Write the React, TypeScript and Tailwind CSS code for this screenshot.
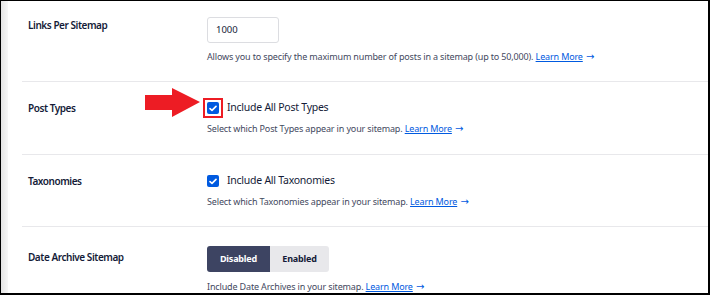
import React from "react";

const font = { fontFamily: '"Noto Sans", "Open Sans", Arial, sans-serif' };

function Check() {
  return (
    <span className="inline-flex items-center justify-center w-[12px] h-[12px] rounded-[2px] bg-[#005ae0]">
      <svg width="8" height="7" viewBox="0 0 8 7" fill="none">
        <path d="M1 3.6 L3 5.4 L7 1.4" stroke="white" strokeWidth="1.6" strokeLinecap="round" strokeLinejoin="round" />
      </svg>
    </span>
  );
}

function Learn() {
  return (
    <>
      {" "}
      <a className="text-[#005ae0] underline underline-offset-1">Learn More</a>
      <span className="text-[#005ae0] text-[10px] tracking-normal" style={{ fontFamily: '"DejaVu Sans", sans-serif' }}> →</span>
    </>
  );
}

const label = "w-[185px] pl-[6px] text-[10px] tracking-[-0.45px] font-semibold text-[#141b38]";
const desc = "text-[9px] leading-[14px] tracking-[-0.15px] text-[#434960] whitespace-nowrap";

export default function App() {
  return (
    <div style={font} className="w-[710px] h-[295px] overflow-hidden bg-white border-t border-l border-r-2 border-b-2 border-black flex">
      <div className="w-[7px] shrink-0 bg-gradient-to-r from-[#e4e4e4] to-[#f7f7f7]" />
      <div className="flex-1 ml-[14px] flex flex-col">
        {/* Row 1 */}
        <div className="flex border-b border-[#e8e8eb] pt-[16px] pb-[17px]">
          <div className={label + " leading-[16px]"}>Links Per Sitemap</div>
          <div className="flex flex-col">
            <div className="w-[72px] h-[26px] border border-[#dcdde1] rounded-[3px] flex items-center pl-[8px] text-[9.5px] text-[#141b38]">1000</div>
            <div className={desc + " mt-[7px]"}>
              Allows you to specify the maximum number of posts in a sitemap (up to 50,000).<Learn />
            </div>
          </div>
        </div>
        {/* Row 2 */}
        <div className="flex border-b border-[#e8e8eb] pt-[16px] pb-[18px]">
          <div className={label + " leading-[20px]"}>Post Types</div>
          <div className="flex flex-col">
            <div className="flex items-center h-[20px]">
              <span className="relative inline-flex">
                <Check />
                <span className="absolute left-[-4px] top-[-4px] w-[20px] h-[20px] border-2 border-[#ed1c24]" />
                <svg className="absolute left-[-62px] top-[-15px]" width="56" height="32" viewBox="0 0 56 32">
                  <polygon points="0,8 27,8 27,1 55,15 27,30 27,23 0,23" fill="#ed1c24" />
                </svg>
              </span>
              <span className="ml-[8px] text-[10.5px] tracking-[-0.25px] text-[#141b38]">Include All Post Types</span>
            </div>
            <div className={desc + " mt-[4px]"}>
              Select which Post Types appear in your sitemap.<Learn />
            </div>
          </div>
        </div>
        {/* Row 3 */}
        <div className="flex border-b border-[#e8e8eb] pt-[16px] pb-[17px]">
          <div className={label + " leading-[20px]"}>Taxonomies</div>
          <div className="flex flex-col">
            <div className="flex items-center h-[20px]">
              <Check />
              <span className="ml-[8px] text-[10.5px] tracking-[-0.25px] text-[#141b38]">Include All Taxonomies</span>
            </div>
            <div className={desc + " mt-[4px]"}>
              Select which Taxonomies appear in your sitemap.<Learn />
            </div>
          </div>
        </div>
        {/* Row 4 */}
        <div className="flex pt-[19px]">
          <div className={label + " leading-[16px] pt-[3px]"}>Date Archive Sitemap</div>
          <div className="flex flex-col">
            <div className="flex h-[26px] rounded-[3px] overflow-hidden w-[122px]">
              <div className="w-[63px] bg-[#3d4462] text-white text-[9px] tracking-[-0.2px] font-bold flex items-center justify-center">Disabled</div>
              <div className="flex-1 bg-[#e8e8eb] text-[#141b38] text-[9px] tracking-[-0.2px] font-bold flex items-center justify-center">Enabled</div>
            </div>
            <div className={desc + " mt-[8px]"}>
              Include Date Archives in your sitemap.<Learn />
            </div>
          </div>
        </div>
      </div>
    </div>
  );
}
